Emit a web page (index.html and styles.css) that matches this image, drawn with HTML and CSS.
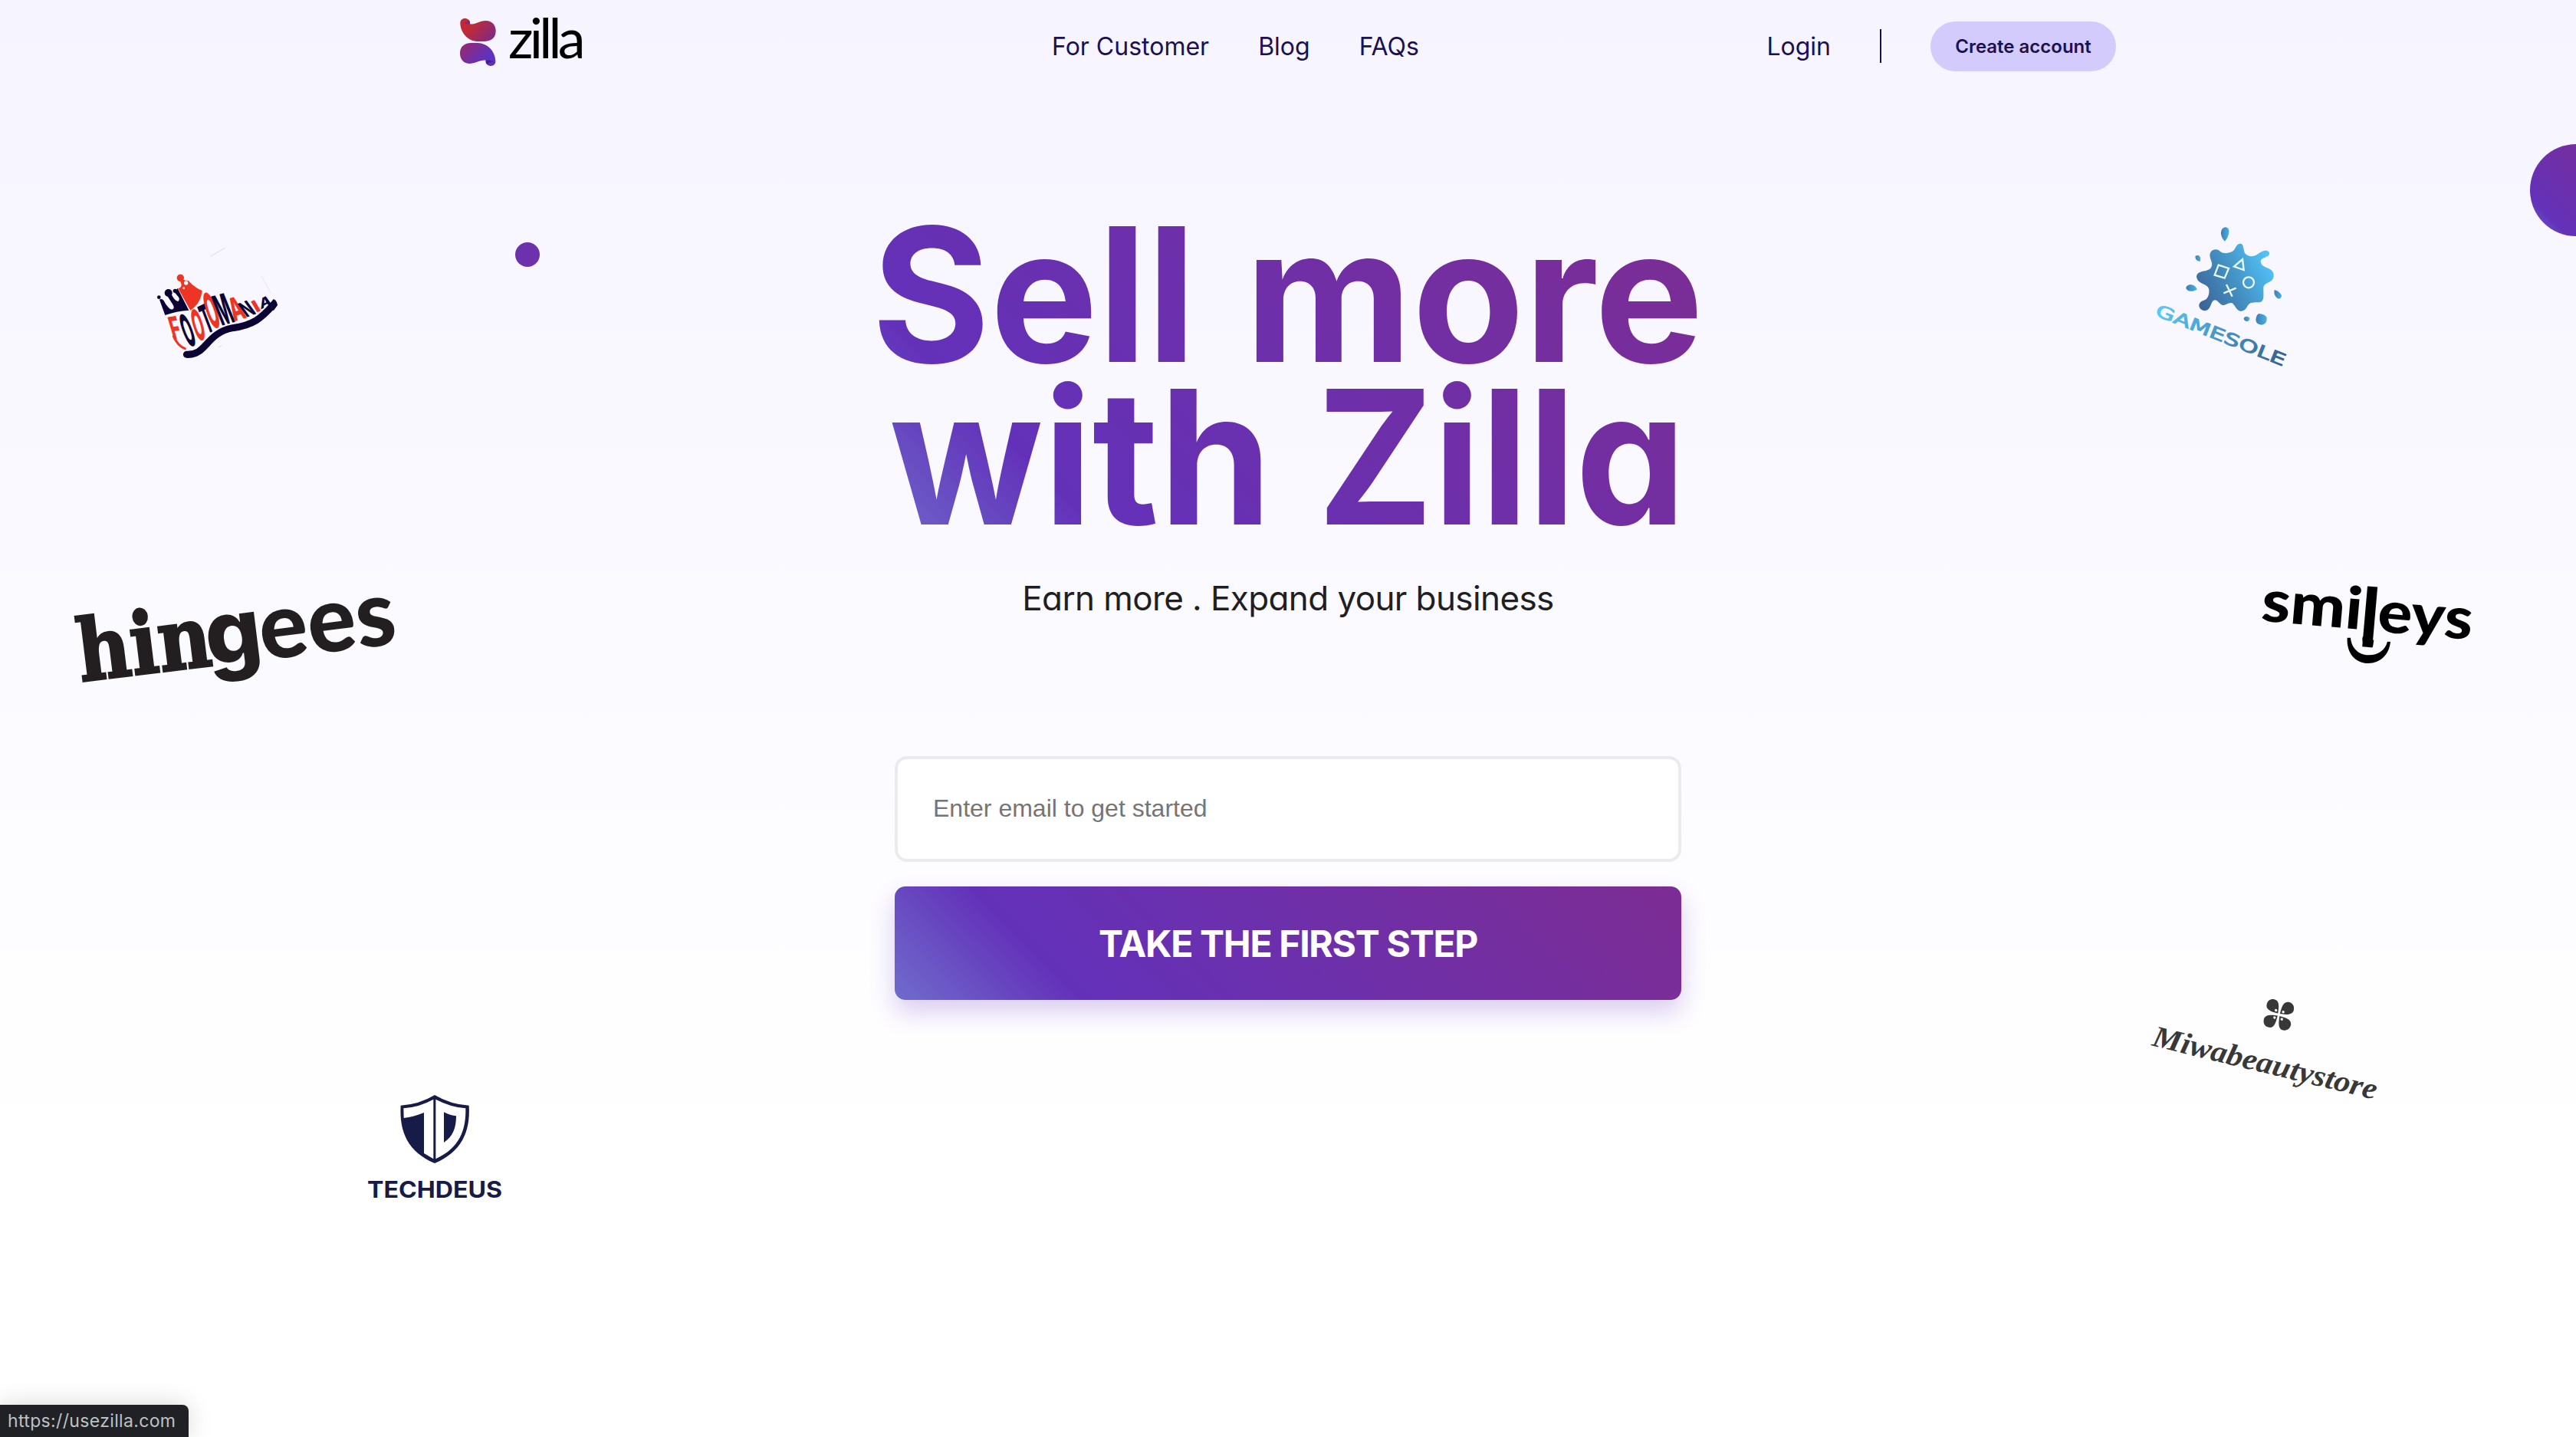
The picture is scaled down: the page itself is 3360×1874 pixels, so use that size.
FILE: index.html
```html
<!DOCTYPE html>
<html lang="en">
<head>
<meta charset="utf-8">
<title>Zilla for business</title>
<link rel="stylesheet" href="styles.css">
</head>
<body>
<header class="header">
  <a class="logo" aria-label="zilla">
    <svg viewBox="110 0 510 360" width="170" height="120">
      <defs>
        <linearGradient id="markTop" gradientUnits="userSpaceOnUse" x1="150" y1="90" x2="245" y2="170">
          <stop offset="0.15" stop-color="#c02a36"/><stop offset="1" stop-color="#792a8e"/>
        </linearGradient>
        <linearGradient id="markLow" gradientUnits="userSpaceOnUse" x1="140" y1="165" x2="225" y2="245">
          <stop offset="0" stop-color="#942a70"/><stop offset="0.85" stop-color="#6132be"/>
        </linearGradient>
      </defs>
      <path fill="url(#markTop)" d="M120 92C119 78 129 71 140 72C152 73 159 82 158 94C184 96 192 82 220 81C244 81 259 98 259 121C259 147 243 161 216 162L190 162C152 161 122 131 120 92Z"/>
      <path fill="#7c2b83" d="M158 94C145 95 136 91 134 87C142 89 151 85 153 78C158 83 159 88 158 94Z"/>
      <path fill="url(#markLow)" d="M258 238C259 252 249 259 238 258C226 257 219 248 220 236C194 234 186 248 158 249C134 249 119 232 119 209C119 183 135 169 162 168L188 168C226 169 256 199 258 238Z"/>
      <path fill="#44208f" d="M220 236C233 235 244 238 250 243C238 242 230 246 225 252C220 247 219 242 220 236Z"/>
      <text class="logo-word" x="308" y="228" textLength="302" lengthAdjust="spacing">zilla</text>
    </svg>
  </a>
  <nav class="nav"><a>For Customer</a><a>Blog</a><a>FAQs</a></nav>
  <div class="account"><a>Login</a><span class="divider"></span><a class="create">Create account</a></div>
</header>

<main class="hero">
  <h1 class="title">
    <svg viewBox="1140 260 1080 440" width="1080" height="440">
      <defs>
        <linearGradient id="ink" gradientUnits="userSpaceOnUse" x1="1127" y1="705" x2="1892" y2="-60">
          <stop offset="0" stop-color="#6f6ccc"/><stop offset="0.21" stop-color="#6331b9"/><stop offset="0.95" stop-color="#7b2d95"/>
        </linearGradient>
      </defs>
      <g fill="url(#ink)">
        <text x="1137" y="472" textLength="423" lengthAdjust="spacingAndGlyphs">Sell</text>
        <text x="1624" y="472" textLength="598" lengthAdjust="spacingAndGlyphs">more</text>
        <text x="1160" y="684" textLength="499" lengthAdjust="spacingAndGlyphs">with</text>
        <text x="1718" y="684" textLength="481" lengthAdjust="spacingAndGlyphs">Zilla</text>
      </g>
    </svg>
  </h1>
  <p class="tagline">Earn more . Expand your business</p>
  <form class="signup">
    <input class="email" type="text" placeholder="Enter email to get started">
    <button class="submit" type="button">TAKE THE FIRST STEP</button>
  </form>
</main>

<span class="dot dot-small"></span>
<span class="dot dot-large"></span>

<svg class="brand footomania" viewBox="0 0 600 510">
  <path d="M284 73L340 40" stroke="#c9c8d8" stroke-width="2"/>
  <path d="M483 151L520 217" stroke="#f7cfd0" stroke-width="2"/>
  <path d="M315 429L328 421" stroke="#f7cfd0" stroke-width="3"/>
  <path fill="none" stroke="#0b0333" stroke-width="27" stroke-linecap="round" d="M190 457C270 461 264 374 370 353C450 343 483 315 530 262"/>
  <path fill="#0b0333" d="M514 262L530 240Q544 246 546 264L530 286Z"/>
  <g fill="#0b0333">
    <circle cx="119" cy="216" r="15"/><circle cx="82" cy="233" r="7"/><circle cx="145" cy="208" r="8"/>
    <path d="M106 303L84 242Q94 236 101 247Q108 262 120 274Q130 285 138 278Q143 272 136 261L111 222L130 220Q142 246 156 249Q164 245 160 234L142 212L155 198L199 284Q150 287 106 303Z"/>
  </g>
  <g fill="#ee3524">
    <circle cx="166" cy="157" r="14"/>
    <path d="M157 199Q170 196 170 184L164 165L177 164Q187 168 197 168Q218 193 251 207Q246 257 205 284Z"/>
  </g>
  <circle cx="188" cy="177" r="8" fill="#f8f7ff"/><circle cx="179" cy="197" r="4" fill="#f8f7ff"/>
  <path fill="none" stroke="#ee3524" stroke-width="9" stroke-linecap="round" d="M139 386Q156 424 184 434"/>
  <g class="boot-letters">
    <text class="red" transform="matrix(.65 -.1 .36 1.21 138 400)">F</text>
    <text transform="matrix(.52 -.13 .62 1.68 196 428)">O</text>
    <text class="red" transform="matrix(.5 -.23 .5 1.62 233 409)">O</text>
    <text transform="matrix(.5 -.25 .55 1.44 270 377)">T</text>
    <text class="red" transform="matrix(.56 -.15 .62 1.86 288 358)">O</text>
    <text transform="matrix(.6 -.17 .62 1.55 327 344)">M</text>
    <text class="red" transform="matrix(.68 -.2 .48 1.17 376 328)">A</text>
    <text transform="matrix(.55 -.2 .52 .72 424 312)">N</text>
    <text class="red" transform="matrix(.8 -.35 .34 .58 462 294)">I</text>
    <text transform="matrix(.55 -.3 .11 .52 480 281)">A</text>
  </g>
</svg>

<svg class="brand hingees" viewBox="0 0 1380 480">
  <g fill="#231f20" transform="translate(103 417) rotate(-7)">
    <text class="slab" x="-26" y="-4" textLength="524" lengthAdjust="spacingAndGlyphs">hin</text>
    <text class="grot" x="477" y="-4" textLength="221" lengthAdjust="spacingAndGlyphs">g</text>
    <text class="round" x="690" y="0" textLength="536" lengthAdjust="spacingAndGlyphs">ees</text>
  </g>
</svg>

<svg class="brand techdeus" viewBox="0 0 660 570">
  <path fill="#161b47" d="M321 84Q383 121 455 125C461 230 425 306 321 351C217 306 182 230 188 125Q260 121 321 84Z"/>
  <path fill="#fff" d="M316 101V334L279 312V153Q240 169 200 174L199 136Q262 131 316 101ZM325 101Q382 131 442 136C444 222 418 292 325 334ZM357 151V270C392 246 405 214 405 166Q382 164 357 151Z" fill-rule="evenodd"/>
  <text x="57" y="487" textLength="528" lengthAdjust="spacingAndGlyphs">TECHDEUS</text>
</svg>

<svg class="brand gamesole" viewBox="0 0 690 660">
  <defs>
    <linearGradient id="splat" gradientUnits="userSpaceOnUse" x1="270" y1="340" x2="550" y2="190">
      <stop offset="0" stop-color="#3d6598"/><stop offset="0.5" stop-color="#4492c4"/><stop offset="1" stop-color="#52c3f9"/>
    </linearGradient>
    <linearGradient id="drop"><stop offset="0" stop-color="#3c7db0"/><stop offset="1" stop-color="#4bb0e2"/></linearGradient>
    <linearGradient id="word"><stop offset="0" stop-color="#59caf6"/><stop offset="1" stop-color="#365f91"/></linearGradient>
  </defs>
  <path fill="url(#splat)" d="M308 166C302 140 330 126 347 143C363 155 385 151 398 142C409 133 410 113 427 113C443 115 436 141 447 154C462 168 481 164 495 154C511 143 528 134 539 146C548 167 508 164 506 182C508 214 557 201 557 237C557 270 520 260 517 286C516 307 523 342 502 343C478 344 466 341 455 356C448 371 439 378 425 377C409 373 404 347 391 345C375 344 369 357 355 353C342 349 335 326 320 337C309 348 310 377 285 376C261 371 258 345 279 337C299 334 306 313 304 292C298 267 260 274 255 243C258 214 299 227 312 207C321 191 311 181 308 166Z"/>
  <g fill="url(#drop)">
    <path d="M366 104C344 84 347 52 368 49C391 50 383 86 366 104Z"/>
    <path d="M250 163Q260 155 268 163Q273 173 270 182Q251 184 250 163Z"/>
    <path d="M257 293Q252 275 231 273Q213 277 214 288Q221 302 241 299Z"/>
    <path d="M560 294Q555 316 573 328Q587 331 588 316Q582 301 560 294Z"/>
    <path d="M440 407Q443 396 455 399Q466 403 463 408Q460 419 450 417Q441 415 440 407Z"/>
    <path d="M498 387Q522 389 530 402Q532 427 511 431Q488 430 487 411Q488 395 498 387Z"/>
  </g>
  <g fill="none" stroke="#e9fbf6" stroke-width="7">
    <path d="M341 197L381 210L365 248L326 236Z"/><path d="M435 174L440 216L402 203Z"/><circle cx="459" cy="265" r="21"/>
    <path d="M372 273L395 320M410 287L361 307"/>
  </g>
  <text fill="url(#word)" stroke="url(#word)" stroke-width="3" transform="translate(90 393) rotate(21.7)" textLength="542" lengthAdjust="spacingAndGlyphs">GAMESOLE</text>
</svg>

<svg class="brand smileys" viewBox="0 0 990 420">
  <g transform="translate(88 209) rotate(5)">
    <text x="-3" y="0" textLength="394" lengthAdjust="spacingAndGlyphs">smi</text>
    <text class="nose" x="383" y="66">l</text>
    <text x="453" y="2" textLength="372" lengthAdjust="spacingAndGlyphs">eys</text>
  </g>
  <path d="M486 270L520 276L519 283L529 284L525 311Q482 309 484 277Z"/>
  <path d="M425 275L438 275C441 317 472 343 509 343C545 343 574 324 582 290L594 291C589 341 554 375 507 375C459 375 421 338 425 275Z"/>
</svg>

<svg class="brand miwa" viewBox="0 0 1020 540">
  <g fill="#383838" transform="translate(577 130) rotate(11)">
    <path id="petal" d="M-4 -4C-20 -6 -54 -5 -54 -30C-54 -46 -43 -56 -29 -56C-5 -56 -5 -24 -4 -4Z"/>
    <use href="#petal" transform="scale(-1 1)"/><use href="#petal" transform="scale(1 -1)"/><use href="#petal" transform="scale(-1 -1)"/>
    <g fill="#fff"><circle cx="-14" cy="-15" r="5"/><circle cx="15" cy="-14" r="5"/><circle cx="-14" cy="14" r="5"/><circle cx="15" cy="15" r="5"/></g>
  </g>
  <text transform="translate(77 250) rotate(13.6)" textLength="900" lengthAdjust="spacingAndGlyphs">Miwabeautystore</text>
</svg>

<div class="status">https://usezilla.com</div>
</body>
</html>
```
FILE: styles.css
```css
* { box-sizing: border-box; }
body {
  margin: 0;
  position: relative;
  height: 1874px;
  overflow: hidden;
  background: linear-gradient(180deg, #f6f4ff 0%, #ffffff 80%);
  font-family: Inter, "Liberation Sans", sans-serif;
}
.header {
  width: 2166px;
  height: 120px;
  margin: 0 auto;
  display: grid;
  grid-template-columns: 775px 1fr auto;
  align-items: center;
  color: #1b1150;
  font-size: 32px;
  padding-right: 3px;
}
.logo, .logo svg { display: block; overflow: visible; }
.logo-word { font: 400 216px Lato, sans-serif; fill: #000; }
.nav { display: flex; gap: 64px; }
.account { display: flex; align-items: center; gap: 64px; }
.divider { width: 2px; height: 44px; background: #1b1150; }
.create {
  width: 242px;
  height: 65px;
  border-radius: 33px;
  background: #d3cbfb;
  font-size: 24px;
  font-weight: 600;
  line-height: 65px;
  text-align: center;
}
.hero { display: flex; flex-direction: column; align-items: center; padding-top: 140px; }
.title { margin: 0; font-size: 243px; font-weight: 700; height: 440px; }
.title svg { display: block; overflow: visible; }
.title, .tagline { font-feature-settings: "cv11" 1; }
.tagline { margin: 52px 0 0; font-size: 44px; line-height: 56px; color: #1f1e22; letter-spacing: -0.6px; }
.signup { width: 1026px; display: flex; flex-direction: column; gap: 32px; margin-top: 178px; }
.email {
  height: 138px;
  border: 4px solid #ebebef;
  border-radius: 16px;
  padding: 0 46px 2px;
  background: #fff;
  font: 32px "Liberation Sans", sans-serif;
}
.email::placeholder { color: #757575; }
.submit {
  height: 148px;
  border: 0;
  border-radius: 14px;
  background: linear-gradient(45deg, #6f6ccc 0%, #6331b9 21%, #7b2d95 95%);
  box-shadow: 0 16px 32px rgba(99, 49, 185, 0.24);
  color: #fff;
  font: 700 48px Inter, sans-serif;
  letter-spacing: -1.3px;
}
.dot { position: absolute; border-radius: 50%; background: linear-gradient(45deg, #6f6ccc 0%, #6331b9 21%, #7b2d95 95%); }
.dot-small { left: 672px; top: 316px; width: 32px; height: 32px; background: #6d31ad; }
.dot-large { left: 3300px; top: 188px; width: 120px; height: 120px; }
.brand { position: absolute; overflow: visible; }
.footomania { left: 180px; top: 310px; width: 200px; height: 170px; }
.boot-letters { font: 800 100px Inter, sans-serif; fill: #0b0333; }
.boot-letters .red { fill: #ee3524; }
.hingees { left: 80px; top: 750px; width: 460px; height: 160px; }
.slab { font: 700 335px "DejaVu Serif", serif; stroke: #231f20; stroke-width: 9px; }
.grot { font: 800 345px Inter, sans-serif; }
.round { font: 900 360px Lato, sans-serif; }
.techdeus { left: 460px; top: 1400px; width: 220px; height: 190px; font: 700 88px Inter, sans-serif; fill: #161b47; }
.gamesole { left: 2780px; top: 280px; width: 230px; height: 220px; font: 400 66px "DejaVu Sans", sans-serif; }
.smileys { left: 2920px; top: 740px; width: 330px; height: 140px; font: 900 228px Lato, sans-serif; }
.nose { font-size: 320px; font-weight: 700; }
.miwa { left: 2780px; top: 1280px; width: 340px; height: 180px; font: italic 700 118px "Liberation Serif", serif; fill: #383838; }
.status {
  position: absolute;
  left: 0;
  bottom: 0;
  width: 246px;
  height: 42px;
  padding-left: 10px;
  background: #202124;
  border-top-right-radius: 8px;
  box-shadow: 0 0 32px rgba(0, 0, 0, 0.16);
  color: #bdc1c6;
  font-size: 23px;
  letter-spacing: 0.35px;
  line-height: 43px;
  white-space: nowrap;
}
```
